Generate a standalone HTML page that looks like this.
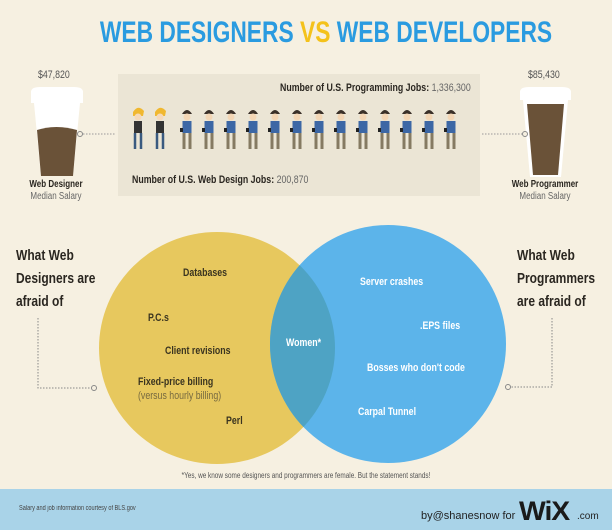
<!DOCTYPE html>
<html><head><meta charset="utf-8"><style>
html,body{margin:0;padding:0}
body{width:612px;height:530px;background:#f6f0e1;position:relative;overflow:hidden;font-family:"Liberation Sans",sans-serif;color:#2a2620}
.t{position:absolute;white-space:nowrap;transform:scaleX(0.8);transform-origin:0 0}
.c{transform-origin:50% 0}
</style></head><body>
<div class="t c" style="left:0;width:652px;text-align:center;top:16px;font-size:30px;font-weight:bold;color:#2a9be0;transform:scaleX(0.76);transform-origin:326px 0">WEB DESIGNERS <span style="color:#f4c21b">VS</span> WEB DEVELOPERS</div>

<svg width="612" height="530" style="position:absolute;left:0;top:0">
<rect x="118" y="74" width="362" height="122" fill="#ebe5d5"/>
<path d="M31 92 Q31 87 40 87 L74 87 Q83 87 83 92 L83 103 L31 103Z" fill="#fff"/>
<path d="M34 103 L80 103 L73 176 L41 176Z" fill="#fff"/>
<path d="M37 130 Q56 124 77 130 L73 176 L41 176Z" fill="#6a5238"/>
<path d="M520 92 Q520 87 529 87 L562 87 Q571 87 571 92 L571 100 L520 100Z" fill="#fff"/>
<path d="M523 100 L568 100 L561 177 L530 177Z" fill="#fff"/>
<path d="M527 104 L564 104 L558 175 L533 175Z" fill="#6a5238"/>
<line x1="83" y1="134" x2="116" y2="134" stroke="#999" stroke-dasharray="1.5 1.5"/>
<circle cx="80" cy="134" r="2.5" fill="#f6f0e1" stroke="#888"/>
<line x1="482" y1="134" x2="522" y2="134" stroke="#999" stroke-dasharray="1.5 1.5"/>
<circle cx="525" cy="134" r="2.5" fill="#f6f0e1" stroke="#888"/>
<ellipse cx="217" cy="348" rx="118" ry="116" fill="#e7c85e"/>
<ellipse cx="388" cy="344" rx="118" ry="119" fill="#5cb4ea"/>
<clipPath id="c"><ellipse cx="217" cy="348" rx="118" ry="116"/></clipPath>
<ellipse cx="388" cy="344" rx="118" ry="119" fill="#4ea3c4" clip-path="url(#c)"/>
<path d="M38 318 L38 388 L92 388" fill="none" stroke="#888" stroke-dasharray="1.5 1.5"/>
<circle cx="94" cy="388" r="2.5" fill="#f6f0e1" stroke="#888"/>
<path d="M552 318 L552 387 L510 387" fill="none" stroke="#888" stroke-dasharray="1.5 1.5"/>
<circle cx="508" cy="387" r="2.5" fill="#f6f0e1" stroke="#888"/>
<rect x="0" y="489" width="612" height="41" fill="#a9d3e8"/>
</svg>
<svg width="612" height="530" style="position:absolute;left:0;top:0">
<defs>
<g id="d"><path d="M-5 -18 Q0 -26 6 -19 L5 -14 L-5 -14Z" fill="#f0b830"/><circle cx="0" cy="-13" r="3.5" fill="#f6d9b8"/><rect x="-4" y="-9" width="8" height="12" fill="#333"/><path d="M-3 3 L-3 19 M3 3 L3 19" stroke="#3a5a80" stroke-width="2.5"/></g>
<g id="p"><path d="M-5 -16 Q0 -24 5 -16Z" fill="#3a3028"/><circle cx="0" cy="-13" r="3.5" fill="#f3d6b5"/><rect x="-4.5" y="-9" width="9" height="12" fill="#3c67a5"/><rect x="-7" y="-2" width="3" height="4" fill="#222"/><path d="M-3 3 L-3 19 M3 3 L3 19" stroke="#857a62" stroke-width="3"/></g>
</defs>
<use href="#d" x="138" y="130"/><use href="#d" x="160" y="130"/>
<use href="#p" x="187" y="130"/><use href="#p" x="209" y="130"/><use href="#p" x="231" y="130"/><use href="#p" x="253" y="130"/><use href="#p" x="275" y="130"/><use href="#p" x="297" y="130"/><use href="#p" x="319" y="130"/><use href="#p" x="341" y="130"/><use href="#p" x="363" y="130"/><use href="#p" x="385" y="130"/><use href="#p" x="407" y="130"/><use href="#p" x="429" y="130"/><use href="#p" x="451" y="130"/>
</svg>

<div class="t" style="left:38px;top:69px;font-size:11px;color:#555">$47,820</div>
<div class="t" style="left:528px;top:69px;font-size:11px;color:#555">$85,430</div>
<div class="t c" style="left:18px;top:179px;font-size:10px;font-weight:bold;width:76px;text-align:center">Web Designer</div>
<div class="t c" style="left:18px;top:191px;font-size:10px;color:#666;width:76px;text-align:center">Median Salary</div>
<div class="t c" style="left:495px;top:179px;font-size:10px;font-weight:bold;width:100px;text-align:center">Web Programmer</div>
<div class="t c" style="left:495px;top:191px;font-size:10px;color:#666;width:100px;text-align:center">Median Salary</div>
<div class="t" style="left:280px;top:82px;font-size:11px;font-weight:bold">Number of U.S. Programming Jobs: <span style="font-weight:normal;color:#666">1,336,300</span></div>
<div class="t" style="left:132px;top:174px;font-size:11px;font-weight:bold">Number of U.S. Web Design Jobs: <span style="font-weight:normal;color:#666">200,870</span></div>

<div class="t" style="left:16px;top:244px;font-size:15px;font-weight:bold;line-height:23px">What Web<br>Designers are<br>afraid of</div>
<div class="t" style="left:517px;top:244px;font-size:15px;font-weight:bold;line-height:23px">What Web<br>Programmers<br>are afraid of</div>

<div class="t" style="left:183px;top:267px;font-size:11px;font-weight:bold;color:#3a3420">Databases</div>
<div class="t" style="left:148px;top:312px;font-size:11px;font-weight:bold;color:#3a3420">P.C.s</div>
<div class="t" style="left:165px;top:345px;font-size:11px;font-weight:bold;color:#3a3420">Client revisions</div>
<div class="t" style="left:138px;top:376px;font-size:11px;font-weight:bold;color:#3a3420">Fixed-price billing</div>
<div class="t" style="left:138px;top:390px;font-size:11px;color:#776a40">(versus hourly billing)</div>
<div class="t" style="left:226px;top:415px;font-size:11px;font-weight:bold;color:#3a3420">Perl</div>
<div class="t" style="left:286px;top:337px;font-size:11px;font-weight:bold;color:#fff">Women*</div>
<div class="t" style="left:360px;top:276px;font-size:11px;font-weight:bold;color:#fff">Server crashes</div>
<div class="t" style="left:420px;top:320px;font-size:11px;font-weight:bold;color:#fff">.EPS files</div>
<div class="t" style="left:367px;top:362px;font-size:11px;font-weight:bold;color:#fff">Bosses who don't code</div>
<div class="t" style="left:358px;top:406px;font-size:11px;font-weight:bold;color:#fff">Carpal Tunnel</div>
<div class="t c" style="left:0;width:612px;text-align:center;top:471px;font-size:8px;color:#555">*Yes, we know some designers and programmers are female. But the statement stands!</div>

<div class="t" style="left:19px;top:505px;font-size:7px;color:#444">Salary and job information courtesy of BLS.gov</div>
<div class="t" style="left:421px;top:510px;font-size:11px;color:#222;transform:none">by@shanesnow for</div>
<div class="t" style="left:519px;top:496px;font-size:27px;font-weight:bold;color:#1a1a1a;letter-spacing:-1px;transform:scaleX(1.05)">WiX</div>
<div class="t" style="left:577px;top:511px;font-size:10px;color:#222;transform:none">.com</div>
</body></html>
